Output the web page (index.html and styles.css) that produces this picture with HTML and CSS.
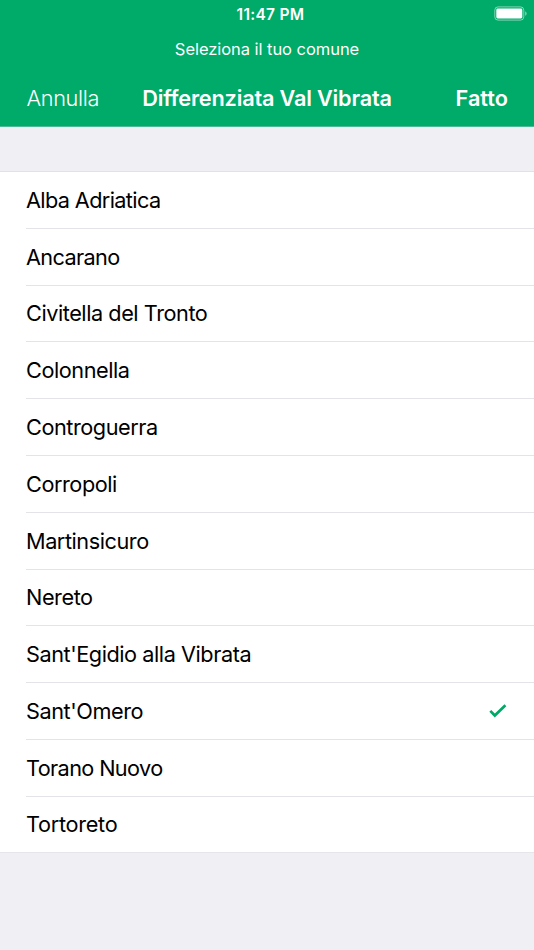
FILE: index.html
```html
<!DOCTYPE html>
<html lang="it">
<head>
<meta charset="utf-8">
<title>Differenziata Val Vibrata</title>
<link rel="stylesheet" href="styles.css">
</head>
<body>
<header class="header">
  <div class="status">
    <span class="time">11:47 PM</span>
    <svg class="battery" width="33" height="15" viewBox="0 0 33 15"><rect x=".8" y=".9" width="29" height="13.2" rx="3.2" fill="none" stroke="#fff" stroke-opacity=".5"/><rect x="2.3" y="2.6" width="26" height="9.8" rx="1.4" fill="#fff"/><path d="M31.3 5.2c1.7.8 1.7 3.8 0 4.6z" fill="#fff" fill-opacity=".6"/></svg>
  </div>
  <p class="prompt">Seleziona il tuo comune</p>
  <nav class="nav">
    <span class="cancel">Annulla</span>
    <h1 class="title">Differenziata Val Vibrata</h1>
    <span class="done">Fatto</span>
  </nav>
</header>
<ul class="list">
  <li class="row tight"><span>Alba Adriatica</span></li>
  <li class="row tight"><span>Ancarano</span></li>
  <li class="row"><span>Civitella del Tronto</span></li>
  <li class="row"><span>Colonnella</span></li>
  <li class="row"><span>Controguerra</span></li>
  <li class="row"><span>Corropoli</span></li>
  <li class="row"><span>Martinsicuro</span></li>
  <li class="row"><span>Nereto</span></li>
  <li class="row"><span>Sant'Egidio alla Vibrata</span></li>
  <li class="row"><span>Sant'Omero</span><svg class="check" width="18" height="14" viewBox="0 0 18 14"><path d="M1.3 6.9l4.5 4.6L16.4 1.2" fill="none" stroke="#00a968" stroke-width="2.7"/></svg></li>
  <li class="row tight"><span>Torano Nuovo</span></li>
  <li class="row loose"><span>Tortoreto</span></li>
</ul>
</body>
</html>
```
FILE: styles.css
```css
* { box-sizing: border-box; margin: 0; padding: 0; }
body { background: #efeff4; font-family: Inter, sans-serif; color: #000; height: 950px; }
.header { background: #00aa68; color: #fff; height: 127px; border-bottom: 1px solid #4db996; }
.status { height: 27px; display: grid; grid-template-columns: 1fr auto 1fr; align-items: center; }
.time { grid-column: 2; font-size: 15.5px; font-weight: 600; letter-spacing: .3px; padding: 1px 0 0 7px; }
.battery { justify-self: end; margin-right: 7px; }
.prompt { height: 43px; line-height: 44px; text-align: center; font-size: 16.5px; letter-spacing: -.05px; }
.nav { height: 56px; padding: 0 26px; display: grid; grid-template-columns: 1fr auto 1fr; align-items: center; font-size: 21.7px; }
.cancel { font-weight: 300; letter-spacing: -.35px; padding-left: .5px; }
.title { font-size: 21.7px; font-weight: 600; letter-spacing: -.18px; }
.done { font-weight: 600; text-align: right; }
.list { list-style: none; margin-top: 44px; background: #fff; border-top: 1px solid #e2e1e6; border-bottom: 1px solid #e6e5ea; padding-left: 26px; }
.row { height: 56.8px; display: flex; align-items: center; justify-content: space-between; padding-right: 27px; font-size: 21.7px; letter-spacing: -.45px; border-bottom: 1px solid #e4e3e7; }
.tight { letter-spacing: -.63px; }
.loose { letter-spacing: -.3px; }
.row:last-child { border-bottom: 0; height: 55.2px; }
```
